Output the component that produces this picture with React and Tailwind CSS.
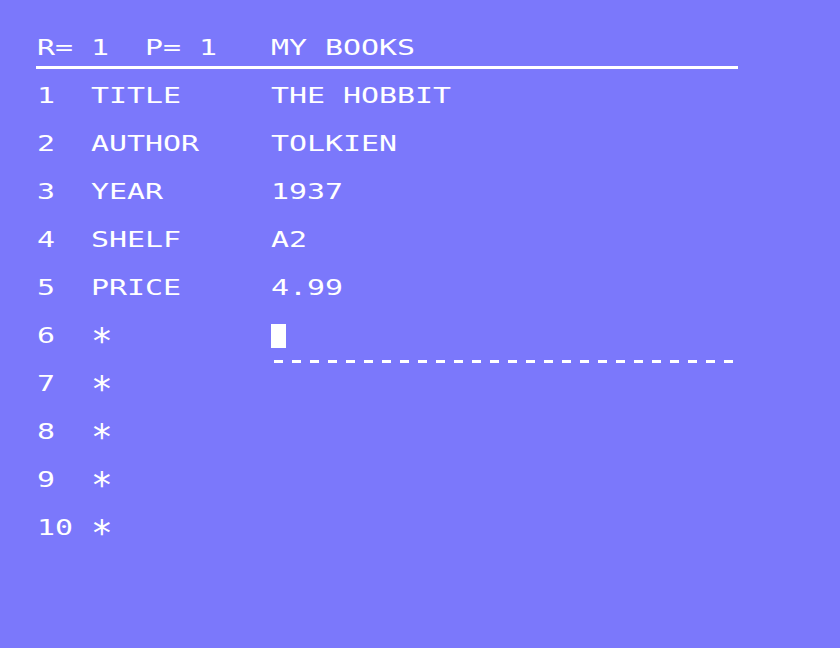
import React from "react";

const rows = [
  { n: "1", label: "TITLE", value: "THE HOBBIT" },
  { n: "2", label: "AUTHOR", value: "TOLKIEN" },
  { n: "3", label: "YEAR", value: "1937" },
  { n: "4", label: "SHELF", value: "A2" },
  { n: "5", label: "PRICE", value: "4.99" },
  { n: "6", label: "*", value: null, cursor: true },
  { n: "7", label: "*", value: "" },
  { n: "8", label: "*", value: "" },
  { n: "9", label: "*", value: "" },
  { n: "10", label: "*", value: "" },
];

// monospace glyphs stretched so each cell is 18px wide like the 8-bit screen
const text =
  "inline-block origin-left scale-x-[1.36] text-white text-[22px] leading-[48px] font-normal whitespace-pre";
const star =
  "inline-block translate-y-[5px] text-white text-[36px] leading-[48px] font-normal";

const Cell = ({ w, children }) => (
  <div className={w}>
    <span className={text}>{children}</span>
  </div>
);

const Row = ({ row }) => (
  <div className="flex h-[48px] items-start">
    <Cell w="w-[54px]">{row.n}</Cell>
    {row.label === "*" ? (
      <div className="w-[180px]">
        <span className={star}>*</span>
      </div>
    ) : (
      <Cell w="w-[180px]">{row.label}</Cell>
    )}
    {row.cursor ? (
      <div className="flex flex-col">
        <div className="mt-[12px] h-[24px] w-[15px] bg-white" />
        <div className="mt-[12px] ml-[3px] flex gap-[9px]">
          {Array.from({ length: 26 }).map((_, i) => (
            <div key={i} className="h-[3px] w-[9px] bg-white" />
          ))}
        </div>
      </div>
    ) : (
      <Cell w="">{row.value}</Cell>
    )}
  </div>
);

export default function App() {
  return (
    <div
      className="w-[840px] h-[648px] bg-[#7b78fb] overflow-hidden pt-[24px] pl-[37px]"
      style={{ fontFamily: '"DejaVu Sans Mono", "Liberation Mono", monospace' }}
    >
      <div className="flex h-[42px] items-start">
        <Cell w="w-[234px]">{"R= 1  P= 1"}</Cell>
        <Cell w="">MY BOOKS</Cell>
      </div>
      <div className="ml-[-1px] h-[3px] w-[702px] bg-white" />
      <div className="mt-[3px] flex flex-col">
        {rows.map((row) => (
          <Row key={row.n} row={row} />
        ))}
      </div>
    </div>
  );
}
